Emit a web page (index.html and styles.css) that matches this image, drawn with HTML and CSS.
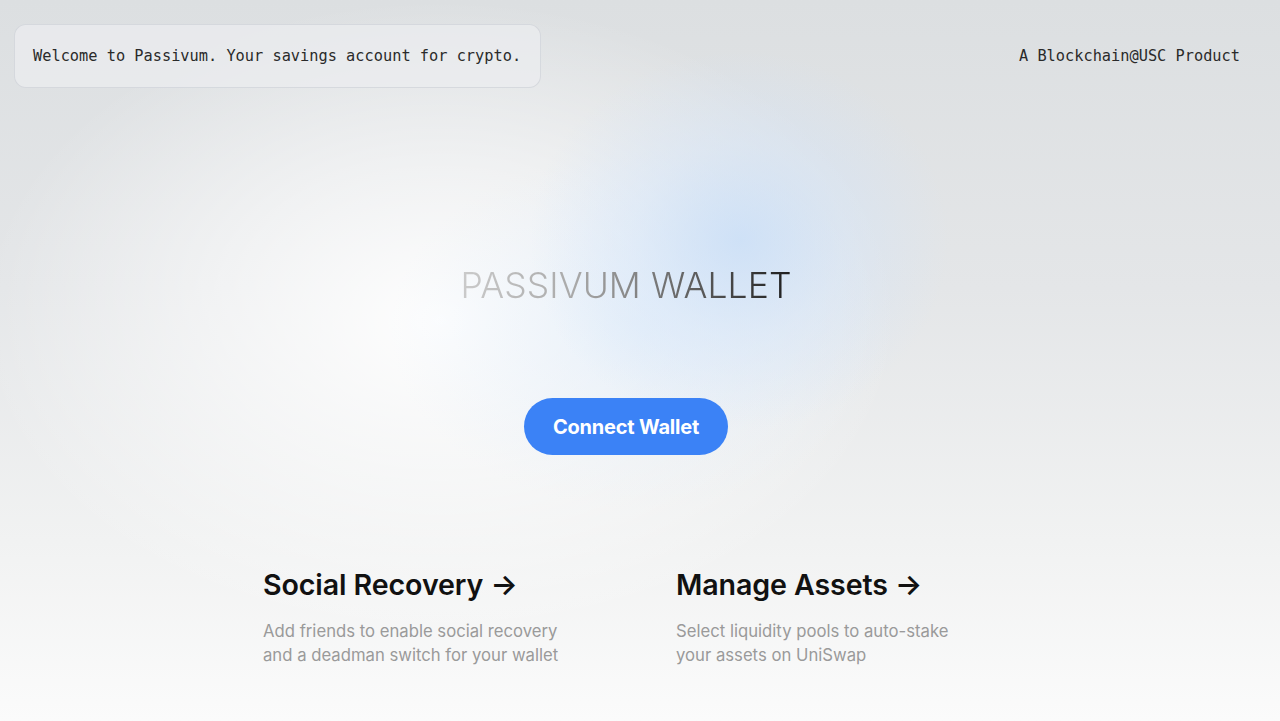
FILE: index.html
```html
<!DOCTYPE html>
<html lang="en">
<head>
<meta charset="utf-8">
<title>Passivum Wallet</title>
<link rel="stylesheet" href="styles.css">
</head>
<body>
<main class="page">
  <header class="top">
    <p class="callout">Welcome to Passivum. Your savings account for crypto.</p>
    <p class="byline">A Blockchain@USC Product</p>
  </header>
  <section class="hero">
    <h1 class="title">PASSIVUM WALLET</h1>
    <button class="connect" type="button">Connect Wallet</button>
  </section>
  <section class="cards">
    <a class="card" href="#">
      <h2 class="card-title">Social Recovery <span class="arrow">→</span></h2>
      <p class="card-text">Add friends to enable social recovery and a deadman switch for your wallet</p>
    </a>
    <a class="card" href="#">
      <h2 class="card-title">Manage Assets <span class="arrow">→</span></h2>
      <p class="card-text">Select liquidity pools to auto-stake your assets on UniSwap</p>
    </a>
  </section>
</main>
</body>
</html>
```

FILE: styles.css
```css
* { box-sizing: border-box; }

html, body {
  margin: 0;
  padding: 0;
  height: 100%;
}

body {
  font-family: "Inter", "Noto Sans", sans-serif;
  color: #111;
  background:
    radial-gradient(ellipse 210px 190px at 740px 240px, rgba(200, 222, 248, 0.8), rgba(210, 228, 250, 0.45) 50%, rgba(220, 233, 248, 0) 100%),
    radial-gradient(ellipse 250px 180px at 640px 330px, rgba(225, 238, 252, 0.6), rgba(235, 242, 252, 0) 100%),
    radial-gradient(ellipse 460px 320px at 440px 320px, rgba(255, 255, 255, 0.95), rgba(255, 255, 255, 0.5) 50%, rgba(255, 255, 255, 0) 100%),
    linear-gradient(to bottom, #dcdfe1 0%, #e4e6e8 40%, #f1f2f2 75%, #fbfbfb 100%);
  overflow: hidden;
}

.page {
  min-height: 721px;
  display: flex;
  flex-direction: column;
}

.top {
  display: flex;
  justify-content: space-between;
  align-items: center;
  padding: 24px 40px 0 14px;
}

.callout, .byline {
  margin: 0;
  font-family: "DejaVu Sans Mono", "Liberation Mono", monospace;
  font-size: 15.3px;
  line-height: 23px;
  color: #2a2a2a;
}

.callout {
  padding: 20px 19px 19px 18px;
  background: rgba(235, 236, 239, 0.75);
  border: 1px solid rgba(200, 204, 210, 0.6);
  border-radius: 12px;
}

.byline {
  padding-top: 1px;
}

.hero {
  display: flex;
  flex-direction: column;
  align-items: center;
  padding-right: 28px;
}

.title {
  margin: 180px 0 0;
  font-size: 35.5px;
  line-height: 35px;
  font-weight: 300;
  letter-spacing: 0.1px;
  background: linear-gradient(to right, #cbcbcb 0%, #a8a8a8 35%, #7a7a7a 58%, #454545 82%, #1e1e1e 100%);
  -webkit-background-clip: text;
  background-clip: text;
  color: transparent;
}

.connect {
  margin-top: 95px;
  height: 57px;
  padding: 0 29px;
  border: none;
  border-radius: 29px;
  background: #3b82f6;
  color: #fff;
  font-family: "Inter", sans-serif;
  font-size: 20px;
  font-weight: 700;
  letter-spacing: -0.2px;
  cursor: pointer;
}

.cards {
  display: grid;
  grid-template-columns: 413px 341px;
  justify-content: center;
  margin-top: 113px;
}

.card {
  text-decoration: none;
  color: inherit;
}

.card-title {
  margin: 0;
  font-size: 28.6px;
  line-height: 34px;
  font-weight: 600;
  color: #111;
  letter-spacing: -0.1px;
}

.card-text {
  margin: 17px 0 0;
  font-size: 16.7px;
  line-height: 24px;
  color: #9a9a9a;
  max-width: 300px;
}
```
